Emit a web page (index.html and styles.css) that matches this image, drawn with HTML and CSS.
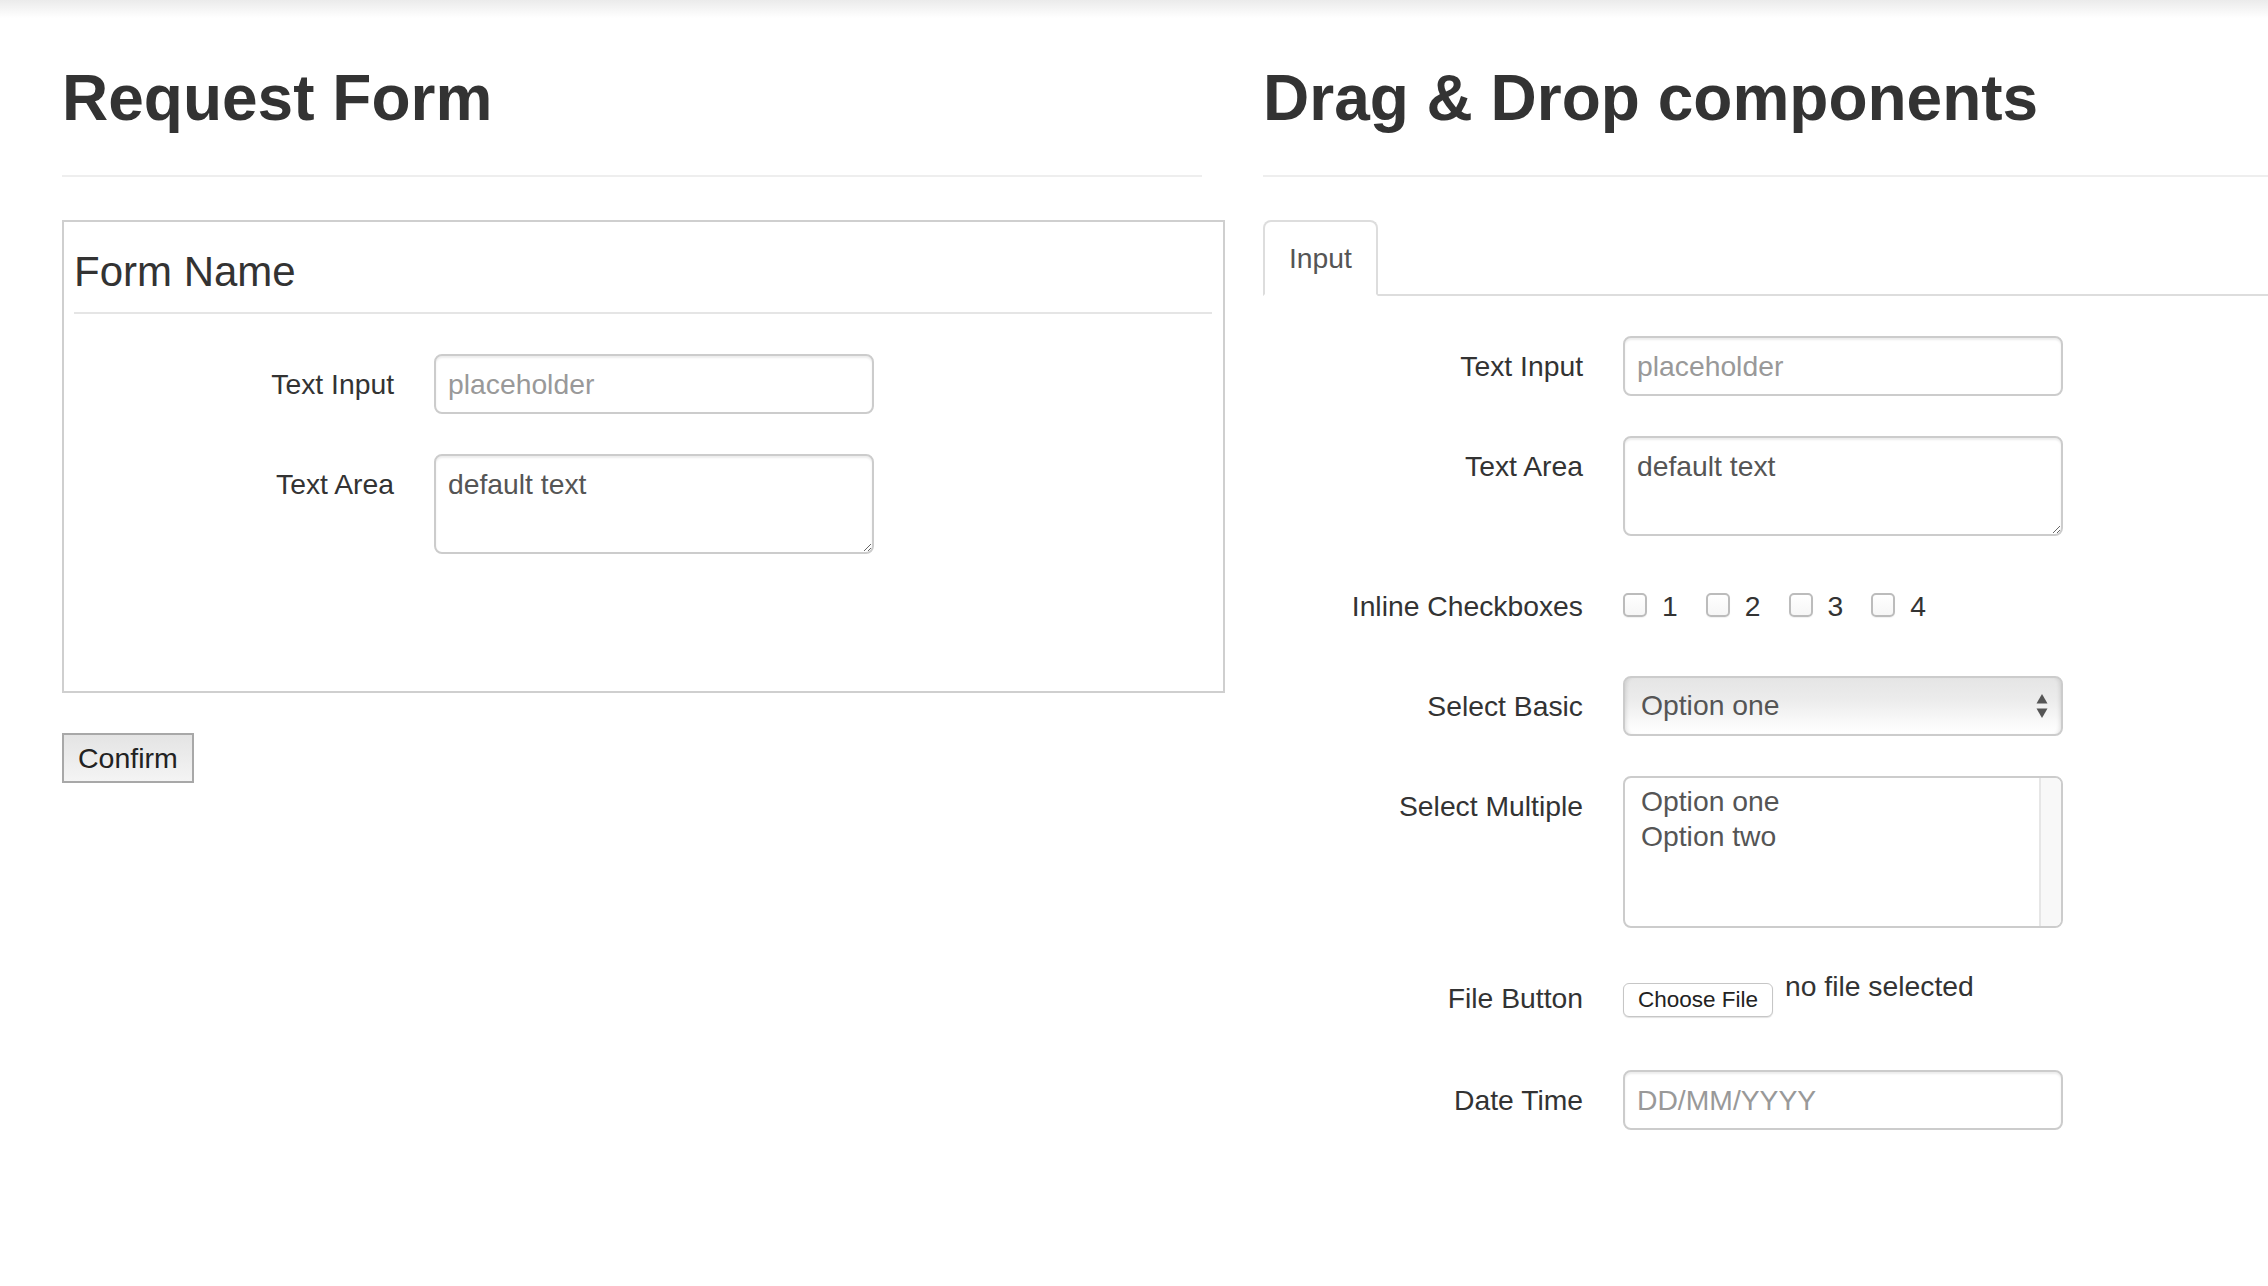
FILE: index.html
```html
<!DOCTYPE html>
<html lang="en">
<head>
<meta charset="utf-8">
<title>Request Form</title>
<link rel="stylesheet" href="styles.css">
</head>
<body>
<div class="topshade"></div>
<div class="layout">
  <section class="col col-left">
    <div class="page-header"><h1>Request Form</h1></div>
    <form class="form-box">
      <div class="legend">Form Name</div>
      <div class="group">
        <label class="ctl-label">Text Input</label>
        <div class="controls"><input class="field" type="text" placeholder="placeholder"></div>
      </div>
      <div class="group">
        <label class="ctl-label">Text Area</label>
        <div class="controls"><textarea class="field area">default text</textarea></div>
      </div>
    </form>
    <button class="confirm" type="button">Confirm</button>
  </section>

  <section class="col col-right">
    <div class="page-header"><h1>Drag &amp; Drop components</h1></div>
    <div class="tabs"><div class="tab">Input</div></div>
    <div class="form-flat">
      <div class="group">
        <label class="ctl-label">Text Input</label>
        <div class="controls"><input class="field" type="text" placeholder="placeholder"></div>
      </div>
      <div class="group">
        <label class="ctl-label">Text Area</label>
        <div class="controls"><textarea class="field area">default text</textarea></div>
      </div>
      <div class="group">
        <label class="ctl-label">Inline Checkboxes</label>
        <div class="controls checks">
          <label class="chk"><input type="checkbox"><span>1</span></label>
          <label class="chk"><input type="checkbox"><span>2</span></label>
          <label class="chk"><input type="checkbox"><span>3</span></label>
          <label class="chk"><input type="checkbox"><span>4</span></label>
        </div>
      </div>
      <div class="group">
        <label class="ctl-label">Select Basic</label>
        <div class="controls">
          <div class="select-basic">
            <span>Option one</span>
            <svg class="arrows" width="12" height="26" viewBox="0 0 12 26"><polygon points="0.5,10.5 11.5,10.5 6,1" fill="#555"/><polygon points="0.5,15.5 11.5,15.5 6,25" fill="#555"/></svg>
          </div>
        </div>
      </div>
      <div class="group">
        <label class="ctl-label">Select Multiple</label>
        <div class="controls">
          <div class="select-multi">
            <div class="opts"><div class="opt">Option one</div><div class="opt">Option two</div></div>
            <div class="track"></div>
          </div>
        </div>
      </div>
      <div class="group">
        <label class="ctl-label">File Button</label>
        <div class="controls file-row">
          <button class="file-btn" type="button">Choose File</button>
          <span class="file-text">no file selected</span>
        </div>
      </div>
      <div class="group">
        <label class="ctl-label">Date Time</label>
        <div class="controls"><input class="field" type="text" placeholder="DD/MM/YYYY"></div>
      </div>
    </div>
  </section>
</div>
</body>
</html>
```

FILE: styles.css
```css
html, body {
  margin: 0;
  padding: 0;
  background: #fff;
  overflow: hidden;
}
body {
  font-family: "Liberation Sans", Arial, Helvetica, sans-serif;
  font-size: 28.3px;
  line-height: 40px;
  color: #333;
  width: 2268px;
  height: 1286px;
}
.topshade {
  height: 18px;
  background: linear-gradient(#ebebeb, #ffffff);
}
.layout {
  display: flex;
  padding-left: 62px;
}
.col-left {
  width: 1140px;
  flex: none;
}
.col-right {
  margin-left: 61px;
  flex: 1;
}
.page-header {
  padding-top: 40px;
  padding-bottom: 37px;
  border-bottom: 2px solid #eee;
  margin-bottom: 43px;
}
.page-header h1 {
  margin: 0;
  font-size: 64px;
  line-height: 80px;
  font-weight: bold;
  color: #333;
  white-space: nowrap;
}
.form-box {
  width: 1163px;
  box-sizing: border-box;
  border: 2px solid #cfcfcf;
  padding: 10px 11px 97px 10px;
  margin: 0;
}
.legend {
  font-size: 42px;
  line-height: 80px;
  color: #333;
  border-bottom: 2px solid #e5e5e5;
  margin-bottom: 40px;
}
.group {
  display: grid;
  grid-template-columns: 320px 440px;
  column-gap: 40px;
  margin-bottom: 40px;
}
.ctl-label {
  text-align: right;
  padding-top: 10px;
  line-height: 40px;
  color: #333;
  white-space: nowrap;
}
.controls {
  min-width: 0;
}
.field {
  display: block;
  width: 440px;
  height: 60px;
  box-sizing: border-box;
  margin: 0;
  padding: 8px 12px;
  border: 2px solid #ccc;
  border-radius: 8px;
  background: #fff;
  font-family: "Liberation Sans", Arial, Helvetica, sans-serif;
  font-size: 28.3px;
  line-height: 40px;
  color: #555;
  box-shadow: inset 0 2px 2px rgba(0,0,0,0.075);
  outline: none;
}
.field::placeholder {
  color: #999;
  opacity: 1;
}
.area {
  height: 100px;
}
.confirm {
  display: block;
  margin-top: 40px;
  height: 50px;
  padding: 0 14px;
  border: 2px solid #a8a8a8;
  border-radius: 0;
  background: linear-gradient(#e4e4e4, #f4f4f4);
  font-family: "Liberation Sans", Arial, Helvetica, sans-serif;
  font-size: 28.5px;
  color: #222;
}
.tabs {
  border-bottom: 2px solid #ddd;
  display: flex;
  margin-bottom: 40px;
}
.tab {
  padding: 16px 24px;
  line-height: 40px;
  border: 2px solid #ddd;
  border-bottom: 2px solid #fff;
  border-radius: 8px 8px 0 0;
  margin-bottom: -2px;
  color: #555;
  background: #fff;
}
.checks {
  display: flex;
  align-items: flex-start;
  height: 60px;
  box-sizing: border-box;
  padding-top: 10px;
  gap: 28px;
}
.chk {
  display: flex;
  align-items: flex-start;
  line-height: 40px;
  color: #333;
}
.chk input {
  appearance: none;
  -webkit-appearance: none;
  width: 24px;
  height: 24px;
  box-sizing: border-box;
  margin: 7px 15px 0 0;
  border: 2px solid #bcbcbc;
  border-radius: 5px;
  background: linear-gradient(#fff, #f6f6f6);
  box-shadow: 0 1px 1px rgba(0,0,0,0.06);
}
.select-basic {
  width: 440px;
  height: 60px;
  box-sizing: border-box;
  border: 2px solid #ccc;
  border-radius: 8px;
  padding: 7px 13px 0 16px;
  display: flex;
  align-items: flex-start;
  justify-content: space-between;
  color: #555;
  background: linear-gradient(#e5e5e5 0%, #ececec 40%, #f8f8f8 75%, #ffffff 100%);
  box-shadow: inset 4px 0 4px -3px rgba(0,0,0,0.12), inset -4px 0 4px -3px rgba(0,0,0,0.12);
}
.select-basic .arrows {
  margin-top: 8px;
}
.select-multi {
  width: 440px;
  height: 152px;
  box-sizing: border-box;
  border: 2px solid #ccc;
  border-radius: 8px;
  display: flex;
  overflow: hidden;
  background: #fff;
  color: #555;
}
.opts {
  flex: 1;
  padding: 6px 16px 0;
}
.opt {
  line-height: 35px;
}
.track {
  width: 20px;
  border-left: 2px solid #e6e6e6;
  background: #f8f8f8;
}
.file-row {
  display: flex;
  align-items: flex-start;
  height: 62px;
}
.file-btn {
  margin-top: 15px;
  width: 150px;
  height: 34px;
  box-sizing: border-box;
  padding: 0;
  border: 1.5px solid #c6c6c6;
  border-radius: 6px;
  background: #fff;
  box-shadow: 0 1px 1px rgba(0,0,0,0.12);
  font-family: "Liberation Sans", Arial, Helvetica, sans-serif;
  font-size: 22.5px;
  color: #222;
}
.file-text {
  margin-left: 12px;
  margin-top: -2px;
  line-height: 40px;
  color: #333;
  white-space: nowrap;
}
```
